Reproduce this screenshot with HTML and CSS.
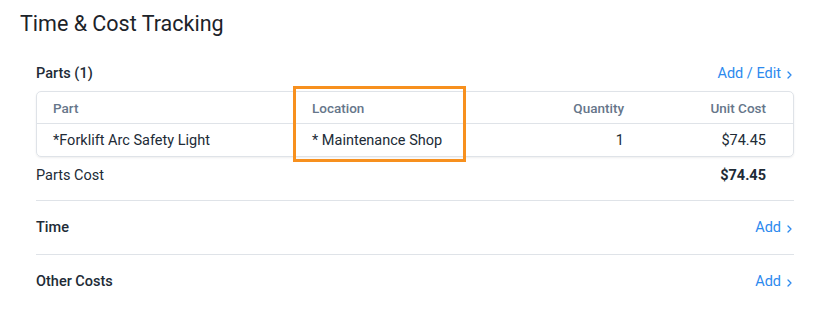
FILE: index.html
```html
<!DOCTYPE html>
<html>
<head>
<meta charset="utf-8">
<link rel="stylesheet" href="styles.css">
</head>
<body>
<div class="page">
  <h1 class="title">Time &amp; Cost Tracking</h1>
  <div class="content">
    <section class="parts">
      <div class="section-head">
        <span class="section-name">Parts (1)</span>
        <a class="action">Add / Edit<svg class="chev" viewBox="0 0 5 8" width="5" height="8"><path d="M1 1 L4 4 L1 7" fill="none" stroke="currentColor" stroke-width="1.3" stroke-linecap="round" stroke-linejoin="round"/></svg></a>
      </div>
      <div class="table-wrap">
        <div class="table">
          <div class="row head">
            <div class="cell c-part">Part</div>
            <div class="cell c-loc">Location</div>
            <div class="cell c-qty">Quantity</div>
            <div class="cell c-cost">Unit Cost</div>
          </div>
          <div class="row body">
            <div class="cell c-part">*Forklift Arc Safety Light</div>
            <div class="cell c-loc">* Maintenance Shop</div>
            <div class="cell c-qty">1</div>
            <div class="cell c-cost">$74.45</div>
          </div>
        </div>
        <div class="highlight"></div>
      </div>
      <div class="total-row">
        <span>Parts Cost</span>
        <span class="total-val">$74.45</span>
      </div>
    </section>
    <section class="line-section">
      <span class="section-name">Time</span>
      <a class="action">Add<svg class="chev" viewBox="0 0 5 8" width="5" height="8"><path d="M1 1 L4 4 L1 7" fill="none" stroke="currentColor" stroke-width="1.3" stroke-linecap="round" stroke-linejoin="round"/></svg></a>
    </section>
    <section class="line-section">
      <span class="section-name">Other Costs</span>
      <a class="action">Add<svg class="chev" viewBox="0 0 5 8" width="5" height="8"><path d="M1 1 L4 4 L1 7" fill="none" stroke="currentColor" stroke-width="1.3" stroke-linecap="round" stroke-linejoin="round"/></svg></a>
    </section>
  </div>
</div>
</body>
</html>
```

FILE: styles.css
```css
html, body {
  margin: 0;
  padding: 0;
  background: #ffffff;
}
body {
  font-family: Roboto, "Liberation Sans", Arial, sans-serif;
  color: #212b36;
  font-size: 14.5px;
}
.page {
  padding: 10px 0 0 20px;
}
.title {
  margin: 0;
  font-size: 21.5px;
  line-height: 28px;
  font-weight: 400;
  color: #1c2329;
}
.content {
  width: 758px;
  margin-left: 16px;
  margin-top: 22px;
}
.section-head {
  display: flex;
  justify-content: space-between;
  align-items: center;
  height: 26px;
  margin-bottom: 5px;
}
.section-name {
  font-weight: 500;
  font-size: 14.5px;
  color: #212b36;
}
.action {
  color: #2c89ee;
  font-size: 14.5px;
  display: flex;
  align-items: center;
  gap: 6px;
  padding-right: 2px;
}
.chev {
  width: 5px;
  height: 8px;
  margin-top: 3px;
}
.table-wrap {
  position: relative;
}
.table {
  border: 1px solid #dfe3e8;
  border-radius: 5px;
  box-shadow: 0 1px 2px rgba(33, 43, 54, 0.08);
  overflow: hidden;
}
.row {
  display: grid;
  grid-template-columns: 259px 177px 167px 1fr;
  align-items: center;
}
.row.head {
  height: 31px;
  border-bottom: 1px solid #dfe3e8;
  color: #66768a;
  font-weight: 500;
  font-size: 13.5px;
}
.row.body {
  height: 32px;
  padding-top: 1px;
  box-sizing: border-box;
}
.cell {
  padding: 0 16px;
  white-space: nowrap;
}
.c-qty {
  text-align: right;
}
.c-cost {
  text-align: right;
  padding-right: 27px;
}
.highlight {
  position: absolute;
  left: 257px;
  top: -5px;
  width: 167px;
  height: 70px;
  border: 3px solid #f7901e;
  pointer-events: none;
}
.total-row {
  display: flex;
  justify-content: space-between;
  align-items: center;
  height: 37px;
  padding-right: 28px;
  border-bottom: 1px solid #dfe3e8;
  padding-bottom: 6px;
}
.total-val {
  font-weight: 700;
}
.line-section {
  display: flex;
  justify-content: space-between;
  align-items: center;
  height: 53px;
  border-bottom: 1px solid #dfe3e8;
}
.line-section:last-child {
  border-bottom: none;
}
```
